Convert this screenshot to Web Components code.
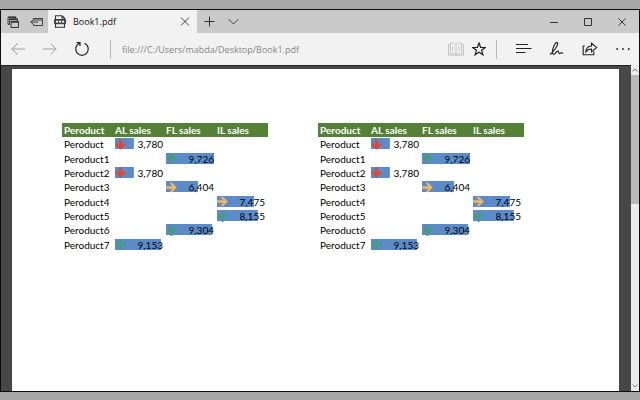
<!DOCTYPE html>
<html lang="en">
<head>
<meta charset="utf-8">
<title>Book1.pdf</title>
<style>
  body {
    margin: 0;
    background: #a8a8a8;
    font-family: "Open Sans", "Noto Sans", sans-serif;
    font-size: 9px;
    color: #222;
  }
</style>
</head>
<body>
<browser-window>
  <tab-strip slot="tabs" label="Book1.pdf"></tab-strip>
  <address-bar slot="toolbar" url="file:///C:/Users/mabda/Desktop/Book1.pdf"></address-bar>
  <pdf-viewer>
    <sales-table></sales-table>
    <sales-table></sales-table>
  </pdf-viewer>
</browser-window>

<script>
const BUTTON_STYLES = `
  button {
    display: flex;
    align-items: center;
    justify-content: center;
    padding: 0;
    border: 0;
    background: none;
    color: inherit;
  }
  svg {
    display: block;
    fill: none;
    stroke: currentColor;
  }
`;

class BrowserWindow extends HTMLElement {
  constructor() {
    super();
    this.attachShadow({ mode: "open" });
    this.shadowRoot.innerHTML = `
      <style>
        :host {
          display: flex;
          flex-direction: column;
          box-sizing: border-box;
          height: 100vh;
          padding: 9px 0 8px;
        }
        .window {
          display: flex;
          flex-direction: column;
          flex: 1;
          min-height: 0;
          border: 1px solid #0c0c0c;
          background: #f2f2f2;
        }
      </style>
      <div class="window">
        <slot name="tabs"></slot>
        <slot name="toolbar"></slot>
        <slot></slot>
      </div>
    `;
  }
}

class TabStrip extends HTMLElement {
  connectedCallback() {
    this.attachShadow({ mode: "open" });
    this.shadowRoot.innerHTML = `
      <style>
        ${BUTTON_STYLES}
        :host {
          display: flex;
          height: 23px;
          background: #cacaca;
          color: #333;
        }
        .aside {
          display: flex;
          width: 47px;
        }
        .aside button {
          flex: 1;
        }
        .tab {
          display: flex;
          align-items: center;
          width: 149px;
          box-sizing: border-box;
          padding: 0 6px;
          background: #f2f2f2;
        }
        .title {
          flex: 1;
          padding-left: 7px;
          color: #111;
        }
        .add {
          width: 24px;
        }
        .list {
          width: 24px;
        }
        .controls {
          display: flex;
          margin-left: auto;
        }
        .controls button {
          width: 34px;
        }
      </style>
      <div class="aside">
        <button aria-label="Tabs you've set aside">
          <svg width="12" height="12" viewBox="0 0 12 12">
            <path d="M2.500 8.500H1V1h8v1.500M2.500 8.500V3h8v2" stroke-width=".9"/>
            <path d="M1 1.500h8M2.500 3.500h8M4 6h7.500" stroke-width="1.300"/>
            <path d="M4 5.500h7.500v6H4z"/>
          </svg>
        </button>
        <button aria-label="Set these tabs aside">
          <svg width="13" height="10" viewBox="0 0 13 10">
            <path d="M3.500 3V1.500h9v7h-9V7M3.500 3h9M.800 5H8M3 3L.800 5 3 7" stroke-width=".9"/>
          </svg>
        </button>
      </div>
      <div class="tab">
        <svg width="12" height="13" viewBox="0 0 12 13" aria-hidden="true">
          <path d="M1.500 4V.700h6.500L10.500 3v1M8 .700V3h2.500M1.500 9v3.200h9V9" stroke-width="1.100"/>
          <path d="M.600 4.500h10.800v4.200H.600z" fill="#555"/>
          <path d="M2 6.600h2M5 6.600h2M8 6.600h2" stroke="#f2f2f2" stroke-width="1.600"/>
        </svg>
        <span class="title"></span>
        <button aria-label="Close tab">
          <svg width="13" height="9" viewBox="0 0 13 9"><path d="M3 .500l8 8M11 .500l-8 8" stroke-width=".9"/></svg>
        </button>
      </div>
      <button class="add" aria-label="New tab">
        <svg width="11" height="11" viewBox="0 0 11 11"><path d="M5.500 .500v10M.500 5.500h10"/></svg>
      </button>
      <button class="list" aria-label="Show tab previews">
        <svg width="11" height="7" viewBox="0 0 11 7"><path d="M.500 1l5 5 5-5" stroke-width=".9"/></svg>
      </button>
      <div class="controls">
        <button aria-label="Minimize">
          <svg width="8" height="8" viewBox="0 0 8 8"><path d="M0 4.500h8"/></svg>
        </button>
        <button aria-label="Maximize">
          <svg width="8" height="8" viewBox="0 0 8 8"><path d="M.500 .500h7v7h-7z"/></svg>
        </button>
        <button aria-label="Close">
          <svg width="8" height="8" viewBox="0 0 8 8"><path d="M.500 .500l7 7M7.500 .500l-7 7"/></svg>
        </button>
      </div>
    `;
    this.shadowRoot.querySelector(".title").textContent = this.getAttribute("label");
  }
}

class AddressBar extends HTMLElement {
  connectedCallback() {
    this.attachShadow({ mode: "open" });
    this.shadowRoot.innerHTML = `
      <style>
        ${BUTTON_STYLES}
        :host {
          display: flex;
          align-items: center;
          height: 32px;
          padding-left: 1px;
          background: #f2f2f2;
          color: #222;
        }
        .nav, .actions {
          display: flex;
        }
        .nav button {
          width: 32px;
        }
        .actions button {
          width: 33px;
        }
        button:disabled {
          color: #999;
        }
        .page button:disabled {
          color: #c4c4c4;
        }
        .divider {
          width: 1px;
          height: 19px;
          background: #b8b8b8;
        }
        .nav + .divider {
          margin-left: 12px;
        }
        input {
          flex: 1;
          min-width: 0;
          padding: 0 11px;
          border: 0;
          outline: 0;
          background: none;
          font: inherit;
          color: #858585;
        }
        .page {
          display: flex;
          gap: 8px;
          margin-right: 10px;
        }
        .actions {
          margin-left: 10px;
        }
      </style>
      <div class="nav">
        <button aria-label="Back" disabled>
          <svg width="14" height="12" viewBox="0 0 14 12"><path d="M.800 6H14M6.500 .500L.800 6l5.700 5.500" stroke-width=".9"/></svg>
        </button>
        <button aria-label="Forward" disabled>
          <svg width="14" height="12" viewBox="0 0 14 12"><path d="M13.200 6H0M7.500 .500L13.200 6l-5.700 5.500" stroke-width=".9"/></svg>
        </button>
        <button aria-label="Refresh">
          <svg width="16" height="16" viewBox="0 0 16 16"><path d="M5.500 2.300a6.300 6.300 0 1 0 5 0M2.500 1.700h3.500V5" stroke-width="1.200"/></svg>
        </button>
      </div>
      <span class="divider"></span>
      <input type="text" aria-label="Address" spellcheck="false">
      <div class="page">
        <button aria-label="Reading view" disabled>
          <svg width="16" height="14" viewBox="0 0 16 14">
            <path d="M8 2.500C6.500 1 4 1 2.500 1v10.500c2 0 4 0 5.500 1 1.500-1 3.500-1 5.500-1V1C12 1 9.500 1 8 2.500zV12.500M2.500 2.500h-2v10.700h15V2.500h-2"/>
            <path d="M4.500 4v5M11 4v5" stroke-width=".8"/>
          </svg>
        </button>
        <button aria-label="Add to favorites">
          <svg width="14" height="14" viewBox="0 0 14 14"><path d="M7 1l1.600 4.300 4.600.200-3.600 2.800 1.300 4.500L7 10.200l-3.900 2.600 1.300-4.500L.800 5.500l4.600-.200z" stroke-width="1.200"/></svg>
        </button>
      </div>
      <span class="divider"></span>
      <div class="actions">
        <button aria-label="Hub">
          <svg width="16" height="10" viewBox="0 0 16 10"><path d="M0 .500h12M0 4.500h15.500M0 8.500h9.500"/></svg>
        </button>
        <button aria-label="Make a web note">
          <svg width="16" height="16" viewBox="0 0 16 16"><path d="M1 13.500C4 11 8.500 5.500 8.700 3c.200-1.800-1.600-2-2.600-.300C4.500 5.500 3 9.500 3.500 12.200c.200 1.200 1.200 1.400 2.200.500L8 10.500c1-1 1.500-.300 1.600.500.200 1.700 1 1.900 2 1.100 1-.800 1.700-.400 2.200.700" stroke-width="1.200"/></svg>
        </button>
        <button aria-label="Share">
          <svg width="16" height="14" viewBox="0 0 16 14"><path d="M2.800 4H1.200v8.800h10.600V9.500M3.800 10C4 6.500 6 4.200 9.500 4V1.200L14.700 5.500 9.500 9.800V7C7 7 5.200 7.800 3.800 10z" stroke-width="1.100"/></svg>
        </button>
        <button aria-label="More">
          <svg width="14" height="4" viewBox="0 0 14 4"><g fill="currentColor" stroke="none"><circle cx="1.200" cy="2" r=".9"/><circle cx="7" cy="2" r=".9"/><circle cx="12.800" cy="2" r=".9"/></g></svg>
        </button>
      </div>
    `;
    this.shadowRoot.querySelector("input").value = this.getAttribute("url");
  }
}

class PdfViewer extends HTMLElement {
  constructor() {
    super();
    this.attachShadow({ mode: "open" });
    this.shadowRoot.innerHTML = `
      <style>
        ${BUTTON_STYLES}
        :host {
          display: flex;
          flex: 1;
          min-height: 0;
          background: #474747;
        }
        .canvas {
          display: flex;
          flex: 1;
          min-width: 0;
          padding: 3px 12px 0 11px;
          border-top: 1px solid #222;
        }
        .sheet {
          display: flex;
          align-items: flex-start;
          gap: 50px;
          flex: 1;
          box-sizing: border-box;
          padding: 54px 50px 0;
          background: #fff;
        }
        .scrollbar {
          display: flex;
          flex-direction: column;
          width: 8px;
          background: #ececec;
          color: #777;
        }
        .scrollbar button {
          height: 10px;
        }
        .track {
          flex: 1;
        }
        .thumb {
          height: 42%;
          background: #b9b9b9;
        }
      </style>
      <div class="canvas">
        <div class="sheet"><slot></slot></div>
      </div>
      <div class="scrollbar">
        <button aria-label="Scroll up">
          <svg width="6" height="4" viewBox="0 0 6 4"><path d="M.500 3.500L3 1l2.500 2.500"/></svg>
        </button>
        <div class="track"><div class="thumb"></div></div>
        <button aria-label="Scroll down">
          <svg width="6" height="4" viewBox="0 0 6 4"><path d="M.500 .500L3 3 5.500 .500"/></svg>
        </button>
      </div>
    `;
  }
}

// table cell content: data bar behind, trend arrow on the left, number on the right
class DataBar extends HTMLElement {
  connectedCallback() {
    const value = Number(this.getAttribute("value"));
    this.attachShadow({ mode: "open" });
    this.shadowRoot.innerHTML = `
      <style>
        :host {
          display: flex;
          align-items: center;
          justify-content: space-between;
          height: 12px;
          padding-right: 3px;
          background: linear-gradient(#5b8bc9, #5b8bc9) no-repeat left top / ${Math.round(value / 102)}% 11px;
        }
        svg {
          display: block;
          fill: ${this.getColor(value)};
          stroke: ${this.getColor(value)};
          stroke-width: .6;
        }
      </style>
      <svg width="11" height="11" viewBox="0 0 11 11" aria-hidden="true">
        <path transform="rotate(${this.getAngle(value)} 5.500 5.500)" d="M5.500 .600L10 5v1.900L6.600 4.400v6H4.400v-6L1 6.900V5z"/>
      </svg>
      <span>${value.toLocaleString("en-US")}</span>
    `;
  }

  getColor(value) {
    if (value > 8000) return "#459d7c";
    return value > 6000 ? "#f3b95c" : "#e2472d";
  }

  getAngle(value) {
    if (value > 8000) return 0;
    return value > 6000 ? 90 : 180;
  }
}

const COLUMNS = ["Peroduct", "AL sales", "FL sales", "IL sales"];
const ROWS = [
  ["Peroduct", 3780, null, null],
  ["Peroduct1", null, 9726, null],
  ["Peroduct2", 3780, null, null],
  ["Peroduct3", null, 6404, null],
  ["Peroduct4", null, null, 7475],
  ["Peroduct5", null, null, 8155],
  ["Peroduct6", null, 9304, null],
  ["Peroduct7", 9153, null, null]
];

class SalesTable extends HTMLElement {
  connectedCallback() {
    this.attachShadow({ mode: "open" });
    this.render();
  }

  render() {
    const head = COLUMNS.map((name) => `<th scope="col">${name}</th>`).join("");
    const body = ROWS.map(([name, ...sales]) => `
      <tr>
        <td class="name">${name}</td>
        ${sales.map((v) => `<td>${v ? `<data-bar value="${v}"></data-bar>` : ""}</td>`).join("")}
      </tr>`).join("");
    this.shadowRoot.innerHTML = `
      <style>
        :host {
          display: block;
          font-family: Lato, "Open Sans", sans-serif;
          font-size: 10px;
          line-height: 12px;
          color: #000;
        }
        table {
          width: 206px;
          height: 129px;
          border-collapse: collapse;
          table-layout: fixed;
        }
        th {
          height: 14px;
          padding: 0;
          background: #538135;
          color: #fff;
          text-align: left;
          white-space: nowrap;
        }
        th:first-child {
          width: 49px;
        }
        th:first-child, .name {
          padding: 0 2px;
        }
        td {
          padding: 0;
        }
      </style>
      <table>
        <thead><tr>${head}</tr></thead>
        <tbody>${body}</tbody>
      </table>
    `;
  }
}

customElements.define("browser-window", BrowserWindow);
customElements.define("tab-strip", TabStrip);
customElements.define("address-bar", AddressBar);
customElements.define("pdf-viewer", PdfViewer);
customElements.define("data-bar", DataBar);
customElements.define("sales-table", SalesTable);
</script>
</body>
</html>
